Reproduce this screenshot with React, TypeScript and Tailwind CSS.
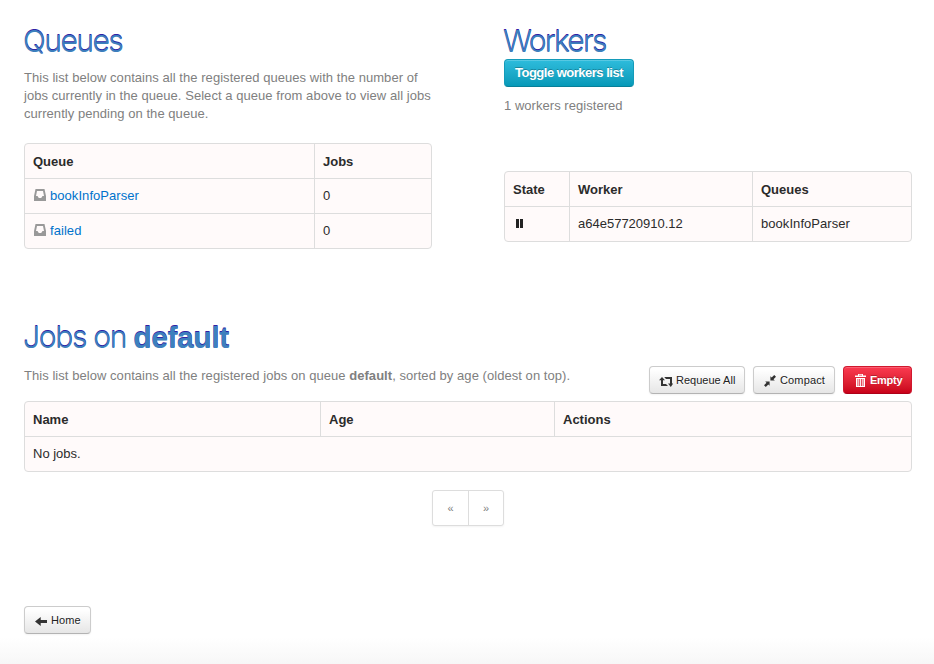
import type { ReactNode } from "react";

const headingClass =
  "-ml-px font-['Inter','Liberation_Sans',sans-serif] text-[30px] leading-9 font-light text-[#3d80bd] [text-shadow:0_-1px_0_#2f22a6] whitespace-nowrap";

function InboxIcon() {
  return (
    <svg className="mr-1 -mt-[2px] ml-px h-3 w-3 shrink-0" viewBox="0 0 12 12" fill="#999">
      <path fillRule="evenodd" d="M1.5 0h9L12 7v5H0V7zM3 2 2 7h1.5L4.8 9h2.4l1.3-2H10L9 2z" />
    </svg>
  );
}

function PauseIcon() {
  return (
    <svg className="-mt-px ml-[3px] h-[9px] w-[7px]" viewBox="0 0 7 9" fill="#222">
      <path d="M0 0h3v9H0zM4 0h3v9H4z" />
    </svg>
  );
}

function RetweetIcon() {
  return (
    <svg className="mt-[3px] h-2.5 w-3.5" viewBox="0 0 14 10" fill="#333">
      <path d="M3 0 6 3.3H4V7h3l2 2H2V3.3H0zM5.2 0H13v6.5h1.2L11.8 10 9 6.5h2V2H7z" />
    </svg>
  );
}

function CompactIcon() {
  return (
    <svg className="mt-0.5 h-3 w-3" viewBox="0 0 12 12" fill="#333">
      <path d="M6.4 1.2 7.7 2.5 10.2 0 12 1.8 9.5 4.3l1.3 1.3H6.4zM1.2 6.4h4.4v4.4L4.3 9.5 1.8 12 0 10.2l2.5-2.5z" />
    </svg>
  );
}

function TrashIcon() {
  return (
    <svg className="mt-px h-[13px] w-[11px]" viewBox="0 0 11 13" fill="#fff">
      <path fillRule="evenodd" d="M3 0h5v1.5h3V3H0V1.5h3zM4 .8v.7h3V.8zM1 4h9v9H1zM2.5 5v7h.8V5zM4.3 5v7h.8V5zM6 5v7h.8V5zM7.7 5v7h.8V5z" />
    </svg>
  );
}

function ArrowLeftIcon() {
  return (
    <svg className="mt-[3px] h-[9px] w-3" viewBox="0 0 12 9" fill="#333">
      <path d="M5.7 0v3H12v3H5.7v3L0 4.5z" />
    </svg>
  );
}

function LightButton({ className, children }: { className: string; children: ReactNode }) {
  return (
    <button
      className={`flex h-7 items-center rounded border border-[#ccc] border-b-[#b3b3b3] bg-linear-to-b from-white from-10% to-[#e6e6e6] text-[11px] leading-4 whitespace-nowrap text-[#222] shadow-[inset_0_1px_0_rgba(255,255,255,.2),0_1px_2px_rgba(0,0,0,.05)] [text-shadow:0_1px_1px_rgba(255,255,255,.75)] ${className}`}
    >
      {children}
    </button>
  );
}

function Table({ columns, head, rows }: { columns: string; head: string[]; rows: ReactNode[][] }) {
  return (
    <div className="divide-y divide-[#ddd] overflow-hidden rounded border border-[#ddd] bg-[#fffafa] text-[#2b2b2b]">
      <div className={`grid divide-x divide-[#ddd] font-bold ${columns}`}>
        {head.map((title) => (
          <div key={title} className="flex h-[34px] items-center px-2 pt-px">{title}</div>
        ))}
      </div>
      {rows.map((row, index) => (
        <div key={index} className={row.length > 1 ? `grid divide-x divide-[#ddd] ${columns}` : ""}>
          {row.map((cell, cellIndex) => (
            <div key={cellIndex} className="flex h-[34px] items-center px-2">{cell}</div>
          ))}
        </div>
      ))}
    </div>
  );
}

export default function App() {
  return (
    <div className="h-[664px] w-[934px] overflow-hidden bg-linear-to-b from-white from-[96%] to-[#f7f7f7] pr-[22px] pl-6 font-['Liberation_Sans',Arial,sans-serif] text-[13px] leading-[18px] text-[#333]">
      <div className="flex h-[296px] justify-between pt-[23px]">
        <section className="w-[408px]">
          <h1 className={`${headingClass} tracking-[-1.5px]`}>Queues</h1>
          <p className="mt-2.5 mb-5 tracking-[0.05px] whitespace-nowrap text-[#808080]">
            This list below contains all the registered queues with the number of
            <br />
            jobs currently in the queue. Select a queue from above to view all jobs
            <br />
            currently pending on the queue.
          </p>
          <Table
            columns="grid-cols-[290px_1fr]"
            head={["Queue", "Jobs"]}
            rows={[
              [<><InboxIcon /><a className="tracking-[0.06px] text-[#0072cc]">bookInfoParser</a></>, "0"],
              [<><InboxIcon /><a className="tracking-[0.06px] text-[#0072cc]">failed</a></>, "0"],
            ]}
          />
        </section>
        <section className="w-[408px]">
          <h1 className={`${headingClass} tracking-[-1.8px]`}>Workers</h1>
          <button className="flex h-7 w-[130px] items-center justify-center rounded border border-[#149bb9] border-b-[#087f98] bg-linear-to-b from-[#2dbcdc] to-[#0599b8] font-bold tracking-[-0.5px] whitespace-nowrap text-white shadow-[inset_0_1px_0_rgba(255,255,255,.2)] [text-shadow:0_-1px_0_rgba(0,0,0,.25)]">
            Toggle workers list
          </button>
          <p className="mt-2.5 mb-[56px] tracking-[0.04px] text-[#808080]">1 workers registered</p>
          <Table
            columns="grid-cols-[65px_183px_1fr]"
            head={["State", "Worker", "Queues"]}
            rows={[[<PauseIcon />, "a64e57720910.12", <span className="tracking-[0.06px]">bookInfoParser</span>]]}
          />
        </section>
      </div>

      <section className="pt-[23px]">
        <h1 className={`${headingClass} tracking-[-1.3px]`}>
          Jobs on <strong className="font-['Liberation_Sans',sans-serif] font-bold tracking-[-0.4px]">default</strong>
        </h1>
        <div className="mb-[7px] flex justify-between pt-2.5">
          <p className="pt-px tracking-[0.05px] text-[#808080]">
            This list below contains all the registered jobs on queue <strong>default</strong>, sorted by age (oldest on top).
          </p>
          <div className="flex gap-2">
            <LightButton className="w-24 gap-[3px] pl-[9px]"><RetweetIcon />Requeue All</LightButton>
            <LightButton className="w-[82px] gap-1 pl-2.5"><CompactIcon /><span className="tracking-[0.15px]">Compact</span></LightButton>
            <button className="flex h-7 w-[69px] items-center gap-1 rounded border border-[#d0182e] border-b-[#ad0018] bg-linear-to-b from-[#fb3a50] to-[#c90019] pl-[11px] text-[11px] font-bold tracking-[-0.25px] text-white shadow-[inset_0_1px_0_rgba(255,255,255,.2)] [text-shadow:0_-1px_0_rgba(0,0,0,.25)]">
              <TrashIcon />Empty
            </button>
          </div>
        </div>
        <Table columns="grid-cols-[296px_234px_1fr]" head={["Name", "Age", "Actions"]} rows={[["No jobs."]]} />
      </section>

      <nav className="mx-auto mt-[18px] grid h-9 w-[72px] grid-cols-[36px_34px] divide-x divide-[#ddd] rounded-[3px] border border-[#ddd] bg-white text-center text-[11px] leading-[34px] text-[#808080] shadow-[0_1px_2px_rgba(0,0,0,.05)]">
        <a>«</a>
        <a>»</a>
      </nav>
      <div className="mt-20">
        <LightButton className="w-[67px] gap-1 pl-2.5"><ArrowLeftIcon /><span className="tracking-[0.1px]">Home</span></LightButton>
      </div>
    </div>
  );
}
